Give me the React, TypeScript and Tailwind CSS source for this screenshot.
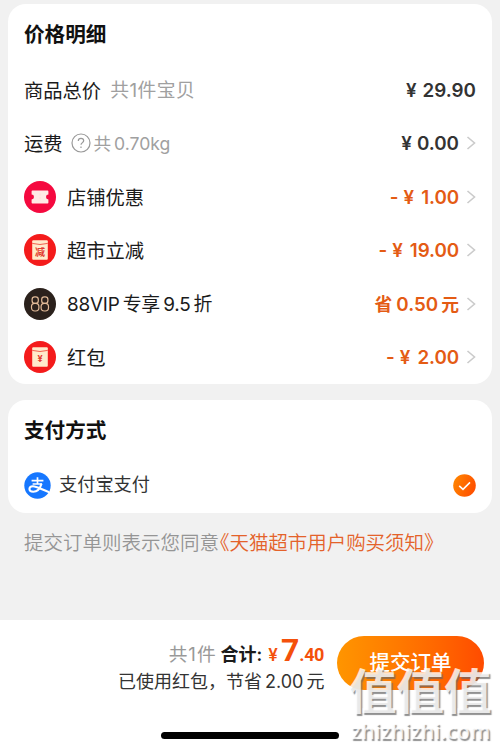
import type { ReactNode } from "react"

function Chevron() {
  return (
    <svg className="w-[10px] h-[14px] ml-[7px]" viewBox="0 0 10 14" fill="none" stroke="#cbcbcb" strokeWidth="1.6">
      <path d="M1.5 1L8.5 7L1.5 13" />
    </svg>
  )
}

function TicketIcon() {
  return (
    <svg className="size-8" viewBox="0 0 32 32">
      <circle cx="16" cy="16" r="16" fill="#f5093f" />
      <path d="M8.4 9.6H23.6Q24.4 9.6 24.4 10.4V13.6A2.4 2.4 0 0 0 24.4 18.4V21.8Q24.4 22.6 23.6 22.6H8.4Q7.6 22.6 7.6 21.8V18.4A2.4 2.4 0 0 0 7.6 13.6V10.4Q7.6 9.6 8.4 9.6Z" fill="#ffebe5" />
      <path d="M16 12.5V20" stroke="#ffe0d8" strokeWidth="1" strokeDasharray="2 1.5" />
    </svg>
  )
}

function EnvelopeIcon({ label, size }: { label: string; size: number }) {
  return (
    <svg className="size-8" viewBox="0 0 32 32">
      <circle cx="16" cy="16" r="16" fill="#f41b1b" />
      <rect x="8.2" y="6.2" width="15.6" height="19.6" rx="1" fill="#ffeacb" />
      <path d="M8.2 9.4Q16 11.6 23.8 9.4" stroke="#f2604f" strokeWidth="1" fill="none" />
      <text x="16" y={14 + size * 0.8} textAnchor="middle" fontSize={size} fontWeight="700" fill="#e23c30">{label}</text>
    </svg>
  )
}

function VipIcon() {
  return (
    <svg className="size-8" viewBox="0 0 32 32">
      <circle cx="16" cy="16" r="16" fill="#2b211c" />
      <g fill="none" stroke="#e2ba98" strokeWidth="1.2">
        <rect x="8.1" y="8.9" width="6.2" height="6.4" rx="2.6" />
        <rect x="7.5" y="15.3" width="7.4" height="7.7" rx="3.2" />
        <rect x="17.7" y="8.9" width="6.2" height="6.4" rx="2.6" />
        <rect x="17.1" y="15.3" width="7.4" height="7.7" rx="3.2" />
      </g>
    </svg>
  )
}

function AlipayIcon() {
  return (
    <svg className="w-[27px] h-[27px]" viewBox="0 0 27 27" fill="none">
      <circle cx="13.5" cy="13.5" r="13.2" fill="#1677ff" />
      <g stroke="#fff">
        <path d="M7.6 8.6H19.4M13.5 5.2V12M8.6 12H18" strokeWidth="1.7" />
        <path d="M17.6 11.6C16 16.8 12.6 19.8 9.2 19.8C6.8 19.8 5.4 18.7 5.4 17.1C5.4 15.4 7 14.3 8.9 14.3C12.6 14.3 17 17.2 25.2 20.2" strokeWidth="2" />
      </g>
    </svg>
  )
}

function Minus({ value }: { value: string }) {
  return (
    <>
      <span>-</span>
      <span className="ml-[5px]">¥</span>
      <span className="ml-[7px] tracking-[-0.1px]">{value}</span>
    </>
  )
}

const discounts: { icon: ReactNode; name: string; amount: ReactNode; nameStyle: string }[] = [
  { icon: <TicketIcon />, name: "店铺优惠", amount: <Minus value="1.00" />, nameStyle: "text-[19.3px]" },
  { icon: <EnvelopeIcon label="减" size={10} />, name: "超市立减", amount: <Minus value="19.00" />, nameStyle: "text-[19.3px]" },
  {
    icon: <VipIcon />,
    name: "88VIP 专享 9.5 折",
    amount: <><span className="text-[17.8px]">省</span><span className="ml-[4px]">0.50</span><span className="ml-[3px] text-[17.8px]">元</span></>,
    nameStyle: "text-[18.9px] tracking-[-0.2px] [word-spacing:-2px]",
  },
  { icon: <EnvelopeIcon label="¥" size={9} />, name: "红包", amount: <Minus value="2.00" />, nameStyle: "text-[19.3px]" },
]

export default function App() {
  return (
    <div className="w-[500px] h-[749px] flex flex-col overflow-hidden bg-[#f1f1f1] pt-1 text-[#1b1b1b] font-['Inter','Noto_Sans_CJK_SC',sans-serif] whitespace-nowrap">

      <section className="mx-2 h-[380px] shrink-0 rounded-[18px] bg-white px-4">
        <h2 className="h-[59px] text-[20.6px] leading-[61px] font-bold text-[#111]">价格明细</h2>

        <div className="h-[53.5px] flex items-center">
          <span className="pt-[3px] text-[19.3px]">商品总价</span>
          <span className="pt-[3px] ml-[9px] text-[18.8px] text-[#a0a0a0] tracking-[0.5px]">共1件宝贝</span>
          <span className="pt-[3px] ml-auto text-[18.8px] font-semibold text-[#333] flex">¥<span className="ml-[6px]">29.90</span></span>
        </div>

        <div className="h-[53.5px] flex items-center">
          <span className="pt-[3px] text-[19.3px]">运费</span>
          <svg className="ml-[8px] size-5" viewBox="0 0 20 20" fill="none" stroke="#999" strokeWidth="1.2">
            <circle cx="10" cy="10" r="9" />
            <path d="M7.3 8.1C7.3 6.4 8.4 5.4 10 5.4C11.6 5.4 12.7 6.4 12.7 7.8C12.7 9.5 10 9.8 10 11.8" />
            <path d="M10 13.4V14.9" />
          </svg>
          <span className="pt-[2px] ml-[3px] text-[17.6px] text-[#a0a0a0] [word-spacing:-2px]">共 0.70kg</span>
          <span className="pt-[2px] ml-auto text-[18.8px] font-semibold text-[#333] flex">¥<span className="ml-[5px]">0.00</span></span>
          <Chevron />
        </div>

        {discounts.map((item) => (
          <div key={item.name} className="h-[53.5px] flex items-center">
            {item.icon}
            <span className={`pt-[3px] ml-[11px] ${item.nameStyle}`}>{item.name}</span>
            <span className="pt-[2px] ml-auto flex items-baseline text-[18.8px] font-semibold text-[#e45b14]">{item.amount}</span>
            <Chevron />
          </div>
        ))}
      </section>

      <section className="mx-2 mt-4 h-[113px] shrink-0 rounded-[18px] bg-white px-4">
        <h2 className="h-[59px] text-[20.6px] leading-[62px] font-bold text-[#111]">支付方式</h2>
        <div className="h-[53px] flex items-start">
          <div className="mt-[13px]"><AlipayIcon /></div>
          <span className="ml-[8px] text-[18.2px] leading-[50px] text-[#333]">支付宝支付</span>
          <svg className="ml-auto mt-[15px] w-[23px] h-[23px]" viewBox="0 0 23 23" fill="none">
            <defs>
              <linearGradient id="check" x1="0" y1="0" x2="1" y2="0.4">
                <stop stopColor="#ff8a00" />
                <stop offset="1" stopColor="#ff5200" />
              </linearGradient>
            </defs>
            <circle cx="11.5" cy="11.5" r="11.3" fill="url(#check)" />
            <path d="M6.2 11.8L10 15.3L17 8.4" stroke="#fff" strokeWidth="1.6" />
          </svg>
        </div>
      </section>

      <p className="ml-6 mt-[15px] text-[19.5px] leading-[30px] font-[350] text-[#959595]">
        提交订单则表示您同意<span className="text-[#e4622a] -ml-[9px] tracking-[-0.05px]">《天猫超市用户购买须知》</span>
      </p>

      <footer className="relative mt-auto h-[129px] shrink-0 bg-white">
        <div className="flex justify-between pl-[118px] pr-4 pt-[16px]">
          <div className="w-[206px] text-right">
            <div className="h-[32px] -mt-[3px] mb-[3px] flex items-baseline justify-end text-[18px] leading-[34px]">
              <span className="text-[#999] tracking-[1px] text-[18.7px]">共1件</span>
              <span className="ml-[4px] font-semibold">合计:</span>
              <span className="ml-[6px] text-[17px] font-semibold text-[#f4500b]">¥</span>
              <span className="ml-[3px] text-[32px] font-bold text-[#f4500b] font-['Roboto',sans-serif]">7</span>
              <span className="text-[18px] font-bold text-[#f4500b] font-['Roboto',sans-serif] tracking-[-0.4px]">.40</span>
            </div>
            <div className="text-[18px] leading-[28px] text-[#333] [word-spacing:-2px]">已使用红包，节省 2.00 元</div>
          </div>
          <button className="w-[147px] h-[54px] rounded-full bg-linear-to-r from-[#ff9500] to-[#ff4b00] text-[20.5px] font-medium text-white">提交订单</button>
        </div>
        <div className="absolute left-[161px] bottom-[10px] w-[178px] h-[7px] rounded-full bg-black" />

        {/* watermark */}
        <div className="absolute left-[349px] top-[45px] text-white/80 [text-shadow:1.5px_1.5px_1px_#666666b8]">
          <div className="text-[47.5px] leading-[54px] font-bold">值值值</div>
          <div className="ml-[2px] text-[21px] leading-[24px] font-semibold tracking-[0.2px] font-['Open_Sans',sans-serif]">zhizhizhi.com</div>
        </div>
      </footer>
    </div>
  )
}
